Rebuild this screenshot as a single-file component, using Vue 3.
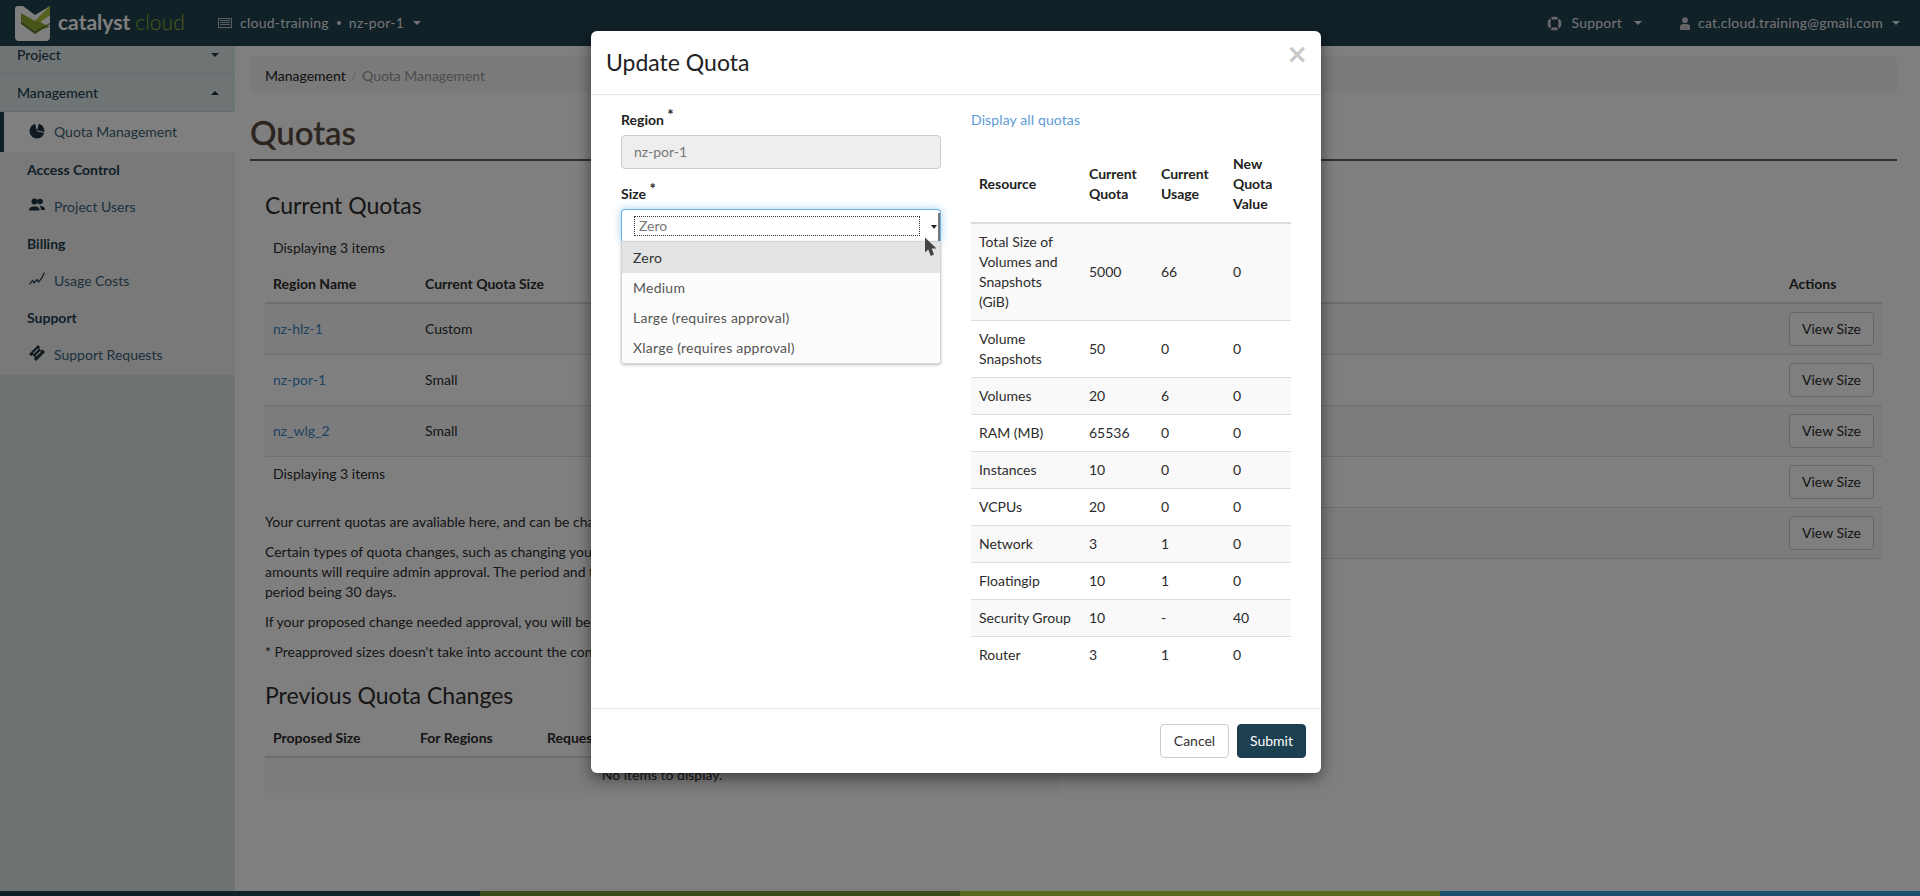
<script setup>
const sideGroups = [
  { title: 'Access Control', items: [{ label: 'Project Users', icon: 'users' }] },
  { title: 'Billing', items: [{ label: 'Usage Costs', icon: 'chart' }] },
  { title: 'Support', items: [{ label: 'Support Requests', icon: 'ticket' }] },
]
const regions = [
  { name: 'nz-hlz-1', size: 'Custom' },
  { name: 'nz-por-1', size: 'Small' },
  { name: 'nz_wlg_2', size: 'Small' },
]
const sizes = ['Zero', 'Medium', 'Large (requires approval)', 'Xlarge (requires approval)']
const quotas = [
  ['Total Size of Volumes and Snapshots (GiB)', '5000', '66', '0'],
  ['Volume Snapshots', '50', '0', '0'],
  ['Volumes', '20', '6', '0'],
  ['RAM (MB)', '65536', '0', '0'],
  ['Instances', '10', '0', '0'],
  ['VCPUs', '20', '0', '0'],
  ['Network', '3', '1', '0'],
  ['Floatingip', '10', '1', '0'],
  ['Security Group', '10', '-', '40'],
  ['Router', '3', '1', '0'],
]
</script>

<template>
  <div class="page">
    <header class="navbar">
      <div class="brand">
        <svg class="logo" width="35" height="35" viewBox="0 0 35 35">
          <path d="M3 0H8L20 9L35 0V31a4 4 0 0 1-4 4H4a4 4 0 0 1-4-4V3a3 3 0 0 1 3-3z" fill="#fff" />
          <path d="M6 7L20 15L35 0V9L25 16L35 21L20 25L6 15z" fill="#8faa30" />
          <path d="M20 15L35 0V9L25 16z" fill="#a9c53c" />
          <path d="M6 15L20 25L35 17V18L20 28L6 18z" fill="#5f7a24" />
        </svg>
        <span class="brand-name">catalyst <em>cloud</em></span>
      </div>
      <div class="project-menu">
        <svg width="14" height="12" viewBox="0 0 14 12"><path d="M0 1h14v10H0z M1 2v8h12V2z M2 3h10v1H2z M2 5h10v1H2z M2 7h10v1H2z" fill="#b9bfc2" fill-rule="evenodd" /></svg>
        <span>cloud-training</span>
        <span class="dot"></span>
        <span>nz-por-1</span>
        <span class="caret"></span>
      </div>
      <div class="nav-right">
        <div class="nav-item support">
          <svg width="15" height="15" viewBox="0 0 15 15"><circle cx="7.500" cy="7.500" r="5.500" fill="none" stroke="#c4c8ca" stroke-width="3" /><path d="M3 2l2.500 3.200M12 2L9.500 5.200M3 13l2.500-3.200M12 13L9.500 9.800" stroke="#10212a" stroke-width="1.200" /></svg>
          <span>Support</span>
          <span class="caret"></span>
        </div>
        <div class="nav-item">
          <svg width="10" height="13" viewBox="0 0 10 13"><circle cx="5" cy="3.200" r="3" fill="#c4c8ca" /><path d="M0 13V9.500C0 7.500 2 7 5 7s5 .5 5 2.500V13z" fill="#c4c8ca" /></svg>
          <span class="email">cat.cloud.training@gmail.com</span>
          <span class="caret"></span>
        </div>
      </div>
    </header>

    <div class="content">
      <aside class="sidebar">
        <div class="side-head first"><span>Project</span><span class="tri down"></span></div>
        <div class="side-head"><span>Management</span><span class="tri up"></span></div>
        <div class="side-link active">
          <svg width="16" height="16" viewBox="0 0 16 16"><circle cx="8" cy="8" r="7.500" fill="#1d3340" /><path d="M8 8L5.800 0H10z" fill="#fff" /><path d="M8 8L16 9.500" stroke="#fff" stroke-width="1" /></svg>
          <span>Quota Management</span>
        </div>
        <div class="side-sub">
          <template v-for="group in sideGroups" :key="group.title">
            <div class="side-title">{{ group.title }}</div>
            <div class="side-link" v-for="item in group.items" :key="item.label">
              <svg v-if="item.icon === 'users'" width="16" height="14" viewBox="0 0 16 14"><circle cx="5.500" cy="3.500" r="3" fill="#1d3340" /><circle cx="11" cy="3.500" r="2.800" fill="#1d3340" /><path d="M0 12.500c0-3 2-4 5.500-4s5 1 5 4z" fill="#1d3340" /><path d="M11 8c3 0 5 1 5 4h-4c0-2-.5-3-1.500-4z" fill="#1d3340" /></svg>
              <svg v-else-if="item.icon === 'chart'" width="16" height="14" viewBox="0 0 16 14"><path d="M.5 12.500L3.500 8.500L5 11L8 7.500L9.500 10L12.500 6.500L15.500 .5" fill="none" stroke="#1d3340" stroke-width="1.200" /></svg>
              <svg v-else width="16" height="16" viewBox="0 0 16 16"><path d="M0 9L9 0L11 2L10 3.500L12 5.500L13.500 4.500L16 7L7 16L5 14L6 12.500L3.500 10L2 11z" fill="#1d3340" /><path d="M4.500 8.500L9 4M7 11L11.500 6.500" stroke="#f2f2f2" stroke-width="1.100" /></svg>
              <span>{{ item.label }}</span>
            </div>
          </template>
        </div>
      </aside>

      <main class="main">
        <div class="breadcrumb">
          <span>Management</span>
          <span class="sep">/</span>
          <span class="crumb-active">Quota Management</span>
        </div>
        <h1 class="page-title">Quotas</h1>
        <div class="section">
          <h3>Current Quotas</h3>
          <div class="columns">
            <div class="col-left">
              <div class="table-note">Displaying 3 items</div>
              <div class="grid-head">
                <span class="col-region">Region Name</span>
                <span class="col-size">Current Quota Size</span>
              </div>
              <div class="grid-row" v-for="(r, i) in regions" :key="r.name" :class="{ striped: i % 2 === 0 }">
                <a class="col-region">{{ r.name }}</a>
                <span class="col-size">{{ r.size }}</span>
              </div>
              <div class="table-note bottom">Displaying 3 items</div>
              <p>Your current quotas are avaliable here, and can be changed to one of the preapproved sizes.</p>
              <p>Certain types of quota changes, such as changing your quota to a larger size or requesting custom quota<br />amounts will require admin approval. The period and the amount are restricted, with the preapproved<br />period being 30 days.</p>
              <p>If your proposed change needed approval, you will be notified once it has been processed.</p>
              <p>* Preapproved sizes doesn't take into account the conversion of your usage.</p>
              <h3 class="prev">Previous Quota Changes</h3>
              <div class="prev-table">
                <div class="prev-head">
                  <span class="p1">Proposed Size</span>
                  <span class="p2">For Regions</span>
                  <span>Requested By</span>
                </div>
                <div class="prev-row">No items to display.</div>
              </div>
            </div>
            <div class="col-right">
              <div class="grid-head actions-head"><span class="col-actions">Actions</span></div>
              <div class="grid-row actions-row" v-for="n in 5" :key="n" :class="{ striped: n % 2 === 1 }">
                <button class="col-actions btn-view">View Size</button>
              </div>
            </div>
          </div>
        </div>
      </main>
    </div>

    <div class="colorbar">
      <span class="c1"></span><span class="c2"></span><span class="c3"></span><span class="c4"></span>
    </div>

    <div class="backdrop"></div>

    <section class="modal">
      <div class="modal-header">
        <h4>Update Quota</h4>
        <span class="close">×</span>
      </div>
      <div class="modal-body">
        <div class="form-col">
          <label>Region <sup>*</sup></label>
          <div class="input disabled">nz-por-1</div>
          <label class="size-label">Size <sup>*</sup></label>
          <div class="select-wrap">
            <div class="select">
              <span class="select-focus">Zero</span>
              <span class="select-edge"></span>
              <span class="select-caret"></span>
            </div>
            <ul class="dropdown">
              <li v-for="(s, i) in sizes" :key="s" :class="{ hover: i === 0 }">{{ s }}</li>
            </ul>
            <svg class="cursor" width="13" height="21" viewBox="0 0 13 21"><path d="M1 .5V15.500L4.300 12.500L6.800 19L10 17.500L7.700 11.500H12.500z" fill="#444" /></svg>
          </div>
        </div>
        <div class="quota-col">
          <a class="show-all">Display all quotas</a>
          <table class="quota-table">
            <thead>
              <tr>
                <th class="q-name">Resource</th>
                <th class="q-num">Current Quota</th>
                <th class="q-num">Current Usage</th>
                <th class="q-num">New Quota Value</th>
              </tr>
            </thead>
            <tbody>
              <tr v-for="q in quotas" :key="q[0]">
                <td v-for="(cell, i) in q" :key="i">{{ cell }}</td>
              </tr>
            </tbody>
          </table>
        </div>
      </div>
      <div class="modal-footer">
        <button class="btn-cancel">Cancel</button>
        <button class="btn-submit">Submit</button>
      </div>
    </section>
  </div>
</template>

<style>
html, body {
  margin: 0;
  background: #fff;
}
</style>

<style scoped>
* {
  box-sizing: border-box;
}
.page {
  position: relative;
  width: 1920px;
  height: 896px;
  overflow: hidden;
  display: flex;
  flex-direction: column;
  font-family: Lato, "Liberation Sans", sans-serif;
  font-size: 14px;
  line-height: 20px;
  color: #2c2c2c;
  background: #fff;
}
.navbar {
  height: 46px;
  flex: none;
  background: #20424f;
  display: flex;
  align-items: center;
  color: #e6e9ea;
}
.brand {
  display: flex;
  align-items: center;
  width: 218px;
  padding-left: 15px;
}
.logo {
  flex: none;
}
.brand-name {
  margin-left: 8px;
  font-size: 21px;
  font-weight: 700;
  color: #fff;
  margin-top: -2px;
}
.brand-name em {
  font-style: normal;
  font-weight: 300;
  color: #9ab52f;
}
.project-menu {
  display: flex;
  align-items: center;
  color: #e6e9ea;
  letter-spacing: .25px;
}
.project-menu svg {
  margin-right: 8px;
}
.dot {
  width: 4px;
  height: 4px;
  border-radius: 50%;
  background: #e6e9ea;
  margin: 0 8px;
}
.caret {
  width: 0;
  height: 0;
  margin-left: 9px;
  border-left: 4px solid transparent;
  border-right: 4px solid transparent;
  border-top: 4px solid #e6e9ea;
}
.nav-right {
  margin-left: auto;
  display: flex;
  align-items: center;
  padding-right: 20px;
}
.nav-item {
  display: flex;
  align-items: center;
  letter-spacing: .22px;
}
.nav-item svg {
  margin-right: 8px;
}
.support {
  margin-right: 38px;
}
.support svg {
  margin-right: 10px;
}
.support .caret {
  margin-left: 12px;
}
.content {
  flex: 1;
  display: flex;
  min-height: 0;
}
.sidebar {
  width: 235px;
  flex: none;
  margin-bottom: 5px;
  background: #dee6e6;
  color: #1f3a48;
}
.side-head {
  height: 38px;
  padding: 0 17px;
  display: flex;
  align-items: center;
  justify-content: space-between;
  font-weight: 500;
  background: #dfe9ea;
  border-bottom: 1px solid #cfdcdf;
  color: #1d4050;
}
.side-head.first {
  height: 28px;
  padding-bottom: 10px;
}
.tri {
  width: 0;
  height: 0;
  border-left: 4px solid transparent;
  border-right: 4px solid transparent;
  margin-right: -1px;
}
.tri.down {
  border-top: 4px solid #1d3340;
}
.tri.up {
  border-bottom: 4px solid #1d3340;
}
.side-link {
  height: 38px;
  padding-bottom: 1px;
  display: flex;
  align-items: center;
  padding-left: 29px;
  gap: 9px;
  color: #3a6278;
}
.side-link svg {
  flex: none;
  margin-top: -3px;
}
.side-link.active {
  height: 40px;
  padding-bottom: 0;
  background: #fff;
  border-left: 4px solid #1d4050;
  padding-left: 25px;
}
.side-sub {
  background: #f2f2f2;
  height: 223px;
}
.side-title {
  height: 36px;
  padding-left: 27px;
  padding-bottom: 1px;
  display: flex;
  align-items: center;
  font-weight: 700;
  color: #1d4050;
}
.main {
  flex: 1;
  min-width: 0;
  padding: 10px 23px 0 15px;
}
.breadcrumb {
  height: 37px;
  background: #f5f5f5;
  border-radius: 4px;
  padding: 3px 15px 0;
  display: flex;
  align-items: center;
  color: #222;
}
.sep {
  margin: 0 5px;
  color: #ccc;
}
.crumb-active {
  color: #999;
}
.page-title {
  margin: 0;
  height: 68px;
  padding-top: 21px;
  font-size: 33px;
  line-height: 36px;
  font-weight: 500;
  color: #57493f;
  -webkit-text-stroke: .3px #57493f;
  border-bottom: 2px solid #6e5e56;
}
.section {
  padding: 0 15px;
}
h3 {
  margin: 0;
  padding-top: 31px;
  font-size: 23px;
  line-height: 26px;
  font-weight: 400;
  color: #2c2c2c;
}
.columns {
  display: flex;
}
.col-left {
  width: 1000px;
  flex: none;
}
.col-right {
  flex: 1;
  padding-top: 40px;
}
.table-note {
  padding: 20px 8px 0;
  height: 40px;
}
.table-note.bottom {
  padding-top: 7px;
  height: 55px;
}
.grid-head,
.grid-row {
  display: flex;
  align-items: center;
  padding: 0 8px;
}
.grid-head {
  height: 46px;
  padding-top: 8px;
  font-weight: 700;
  border-bottom: 2px solid #ddd;
}
.grid-row {
  height: 51px;
  border-bottom: 1px solid #ddd;
}
.grid-row.striped {
  background: #f9f9f9;
}
.actions-head,
.actions-row {
  justify-content: flex-end;
}
.col-region {
  width: 152px;
  flex: none;
}
a.col-region {
  color: #3f86c4;
}
.col-size {
  flex: 1;
}
.col-actions {
  width: 85px;
  flex: none;
}
.btn-view {
  height: 34px;
  border: 1px solid #ccc;
  border-radius: 4px;
  background: #fff;
  color: #2c2c2c;
  font: inherit;
  padding: 0;
}
p {
  margin: 0 0 10px;
}
h3.prev {
  padding-top: 10px;
}
.prev-table {
  width: 794px;
}
.prev-head {
  height: 50px;
  padding: 12px 8px 0;
  display: flex;
  align-items: center;
  font-weight: 700;
  border-bottom: 2px solid #ddd;
}
.p1 {
  width: 147px;
}
.p2 {
  width: 127px;
}
.prev-row {
  height: 35px;
  background: #f9f9f9;
  text-align: center;
  padding-top: 7px;
}
.colorbar {
  position: absolute;
  left: 0;
  right: 0;
  bottom: 0;
  height: 5px;
  display: flex;
}
.colorbar span {
  flex: 1;
}
.c1 { background: #20424f; }
.c2 { background: #7a9438; }
.c3 { background: #b4d438; }
.c4 { background: #349ede; }
.backdrop {
  position: absolute;
  inset: 0;
  background: rgba(0, 0, 0, .5);
}
.modal {
  position: absolute;
  left: 591px;
  top: 31px;
  width: 730px;
  height: 742px;
  background: #fff;
  border-radius: 6px;
  box-shadow: 0 5px 15px rgba(0, 0, 0, .5);
  display: flex;
  flex-direction: column;
}
.modal-header {
  height: 64px;
  flex: none;
  padding: 0 15px;
  display: flex;
  align-items: center;
  justify-content: space-between;
  border-bottom: 1px solid #e5e5e5;
}
h4 {
  margin: -2px 0 0;
  font-size: 23px;
  line-height: 26px;
  font-weight: 400;
  color: #222;
}
.close {
  font-family: "DejaVu Sans", sans-serif;
  font-size: 26px;
  line-height: 20px;
  font-weight: 700;
  color: #c8c8c8;
  margin: -17px -2px 0 0;
}
.modal-body {
  flex: 1;
  display: flex;
  padding: 15px 30px 0;
}
.form-col {
  width: 320px;
  flex: none;
}
label {
  display: block;
  height: 20px;
  margin-bottom: 5px;
  font-weight: 700;
  color: #222;
}
sup {
  font-size: 15px;
  line-height: 0;
  vertical-align: 5px;
}
.input {
  height: 34px;
  padding: 0 12px;
  display: flex;
  align-items: center;
  border: 1px solid #ccc;
  border-radius: 4px;
  background: #eee;
  color: #777;
}
.size-label {
  margin-top: 15px;
}
.select-wrap {
  position: relative;
}
.select {
  height: 32px;
  border: 1px solid #66afe9;
  border-bottom: 0;
  border-radius: 4px 4px 0 0;
  box-shadow: 0 0 8px rgba(102, 175, 233, .6);
  background: #fff;
  padding: 6px 0 0 12px;
  position: relative;
}
.select-focus {
  display: block;
  width: 286px;
  height: 20px;
  line-height: 18px;
  border: 1px dotted #333;
  padding-left: 4px;
  color: #777;
}
.select-edge {
  position: absolute;
  right: 0;
  top: 3px;
  bottom: 0;
  width: 2px;
  background: #777;
}
.select-caret {
  position: absolute;
  right: 3px;
  top: 15px;
  width: 0;
  height: 0;
  border-left: 3px solid transparent;
  border-right: 3px solid transparent;
  border-top: 4px solid #222;
}
.dropdown {
  position: absolute;
  left: 0;
  right: 0;
  top: 32px;
  margin: 0;
  padding: 0;
  height: 123px;
  list-style: none;
  background: #fcfcfc;
  border: 1px solid #d4d4d4;
  border-radius: 0 0 3px 3px;
  box-shadow: 0 1px 3px rgba(0, 0, 0, .25);
  color: #555;
  letter-spacing: .25px;
}
.dropdown li {
  height: 30px;
  padding: 5px 0 0 11px;
}
.dropdown li.hover {
  height: 31px;
  padding-top: 6px;
  background: #e2e3e4;
  color: #333;
}
.cursor {
  position: absolute;
  left: 303px;
  top: 28px;
}
.quota-col {
  margin-left: 30px;
  width: 320px;
  flex: none;
}
.show-all {
  display: block;
  height: 20px;
  color: #5b9bd5;
  letter-spacing: .12px;
}
.quota-table {
  width: 320px;
  margin-top: 16px;
  border-collapse: collapse;
  table-layout: fixed;
}
.quota-table th {
  text-align: left;
  padding: 8px;
  vertical-align: middle;
  font-weight: 700;
  color: #222;
  border-bottom: 2px solid #ddd;
}
.q-name {
  width: 110px;
}
.q-num {
  width: 72px;
}
.quota-table th:last-child {
  width: 66px;
}
.quota-table td {
  padding: 8px;
  border-top: 1px solid #ddd;
  vertical-align: middle;
  color: #2c2c2c;
}
.quota-table tr:first-child td {
  border-top: 0;
}
.quota-table tbody tr:nth-child(odd) {
  background: #f9f9f9;
}
.modal-footer {
  height: 65px;
  flex: none;
  padding: 15px 15px 0;
  display: flex;
  justify-content: flex-end;
  gap: 8px;
  border-top: 1px solid #e5e5e5;
}
.modal-footer button {
  width: 69px;
  height: 34px;
  border-radius: 4px;
  font: inherit;
  padding: 0;
}
.btn-cancel {
  border: 1px solid #ccc;
  background: #fff;
  color: #333;
}
.btn-submit {
  border: 1px solid #1d4050;
  background: #1d4050;
  color: #fff;
}
</style>
